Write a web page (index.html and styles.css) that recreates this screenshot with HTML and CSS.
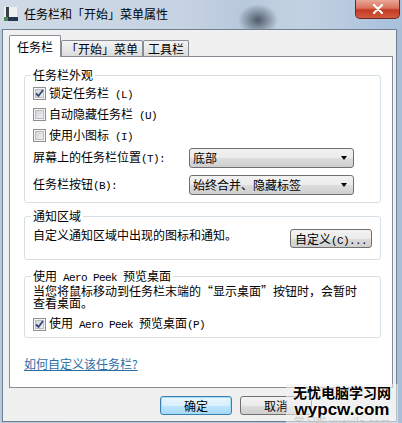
FILE: index.html
```html
<!DOCTYPE html>
<html lang="zh-CN">
<head>
<meta charset="utf-8">
<title>任务栏和「开始」菜单属性</title>
<link rel="stylesheet" href="styles.css">
</head>
<body>
<div class="window">
  <div class="titlebar">
    <svg class="app-icon" viewBox="0 0 16 16" width="16" height="16">
      <rect x="1" y="1" width="13" height="12" fill="#eef0f2"/>
      <rect x="3" y="1" width="3" height="11" fill="#3a3f45"/>
      <rect x="1" y="11" width="14" height="4" fill="#24364d"/>
      <rect x="1" y="11" width="4" height="4" fill="#4f8a55"/>
    </svg>
    <span class="title">任务栏和「开始」菜单属性</span>
    <div class="close">
      <svg viewBox="0 0 12 10" width="12" height="10"><path d="M2 1 L10 9 M10 1 L2 9" stroke="#fff" stroke-width="2.2" stroke-linecap="round"/></svg>
    </div>
  </div>
  <div class="client">
    <div class="tabs">
      <div class="tab active">任务栏</div>
      <div class="tab">「开始」菜单</div>
      <div class="tab">工具栏</div>
    </div>
    <div class="panel">
      <fieldset class="group g1">
        <legend>任务栏外观</legend>
        <div class="check-row"><span class="cb"><svg viewBox="0 0 11 11" width="11" height="11"><path d="M2 5.5 L4.5 8 L9 2" stroke="#33487a" stroke-width="1.8" fill="none"/></svg></span><span class="ct">锁定任务栏<span class="m"> (L)</span></span></div>
        <div class="check-row"><span class="cb"></span><span class="ct">自动隐藏任务栏<span class="m"> (U)</span></span></div>
        <div class="check-row"><span class="cb"></span><span class="ct">使用小图标<span class="m"> (I)</span></span></div>
        <div class="select-row first">
          <span class="lbl">屏幕上的任务栏位置<span class="m">(T):</span></span>
          <div class="select"><span>底部</span><i class="arrow"></i></div>
        </div>
        <div class="select-row second">
          <span class="lbl">任务栏按钮<span class="m">(B):</span></span>
          <div class="select"><span>始终合并、隐藏标签</span><i class="arrow"></i></div>
        </div>
      </fieldset>
      <fieldset class="group g2">
        <legend>通知区域</legend>
        <div class="notify-row">
          <span class="notify-text">自定义通知区域中出现的图标和通知。</span>
          <div class="btn wide">自定义<span class="m">(C)...</span></div>
        </div>
      </fieldset>
      <fieldset class="group g3">
        <legend>使用<span class="m"> Aero Peek </span>预览桌面</legend>
        <p class="peek-text">当您将鼠标移动到任务栏末端的“显示桌面”按钮时，会暂时<br>查看桌面。</p>
        <div class="check-row peek"><span class="cb"><svg viewBox="0 0 11 11" width="11" height="11"><path d="M2 5.5 L4.5 8 L9 2" stroke="#33487a" stroke-width="1.8" fill="none"/></svg></span><span class="ct">使用<span class="m"> Aero Peek </span>预览桌面<span class="m">(P)</span></span></div>
      </fieldset>
      <a class="help-link" href="#">如何自定义该任务栏?</a>
    </div>
    <div class="buttons">
      <div class="btn default">确定</div>
      <div class="btn">取消</div>
    </div>
  </div>
  <div class="watermark">
    <div class="wm-cn">无忧电脑学习网</div>
    <div class="wm-en">wypcw.com</div>
    <div class="wm-faint">学习啦 xuexila.com</div>
  </div>
</div>
</body>
</html>
```

FILE: styles.css
```css
* { box-sizing: border-box; }
html, body { margin: 0; padding: 0; }
body {
  width: 402px;
  height: 423px;
  overflow: hidden;
  font-family: "Noto Sans CJK SC", "Noto Sans", sans-serif;
  font-size: 12px;
  color: #000;
  background: #b4c7dc;
}
.window {
  position: relative;
  width: 402px;
  height: 423px;
  overflow: hidden;
  display: flex;
  flex-direction: column;
  background: linear-gradient(90deg, #b9cadc 0%, #b3c6db 60%, #a9bfd8 100%);
}
.titlebar {
  flex: none;
  height: 29px;
  display: flex;
  align-items: flex-start;
  background:
    radial-gradient(ellipse 20px 16px at 258px 20px, rgba(50,62,76,0.8), rgba(50,62,76,0) 100%),
    linear-gradient(90deg, #cfdae6 0%, #c6d3e2 45%, #b8c9dc 60%, #c3d2e2 75%, #a8c0db 100%);
}
.app-icon { margin: 6px 0 0 3px; flex: none; }
.title {
  margin: 6px 0 0 5px;
  line-height: 16px;
  font-size: 12px;
}
.close {
  margin-left: auto;
  margin-right: 2px;
  width: 45px;
  height: 19px;
  border: 1px solid #6d2a22;
  border-top: none;
  border-radius: 0 0 5px 5px;
  background: linear-gradient(#e9a796 0%, #d9735f 45%, #c23a22 55%, #d25a3e 100%);
  display: flex;
  align-items: center;
  justify-content: center;
}
.close svg { display: block; }
.client {
  flex: 1;
  margin: 0 5px 1px 2px;
  border: 1px solid #6e7f91;
  background: #f0f0f0;
  display: flex;
  flex-direction: column;
}
.tabs {
  flex: none;
  height: 27px;
  margin-bottom: -1px;
  padding-left: 6px;
  display: flex;
  align-items: flex-end;
  position: relative;
  z-index: 1;
}
.tab {
  height: 16px;
  margin-bottom: 1px;
  border: 1px solid #898c95;
  border-bottom: none;
  border-radius: 2px 2px 0 0;
  background: linear-gradient(#f4f4f4, #e6e6e6 60%, #dcdcdc);
  text-align: center;
  line-height: 16px;
  padding: 0 4px;
  white-space: nowrap;
}
.tab:nth-child(2) { width: 82px; }
.tab:nth-child(3) { width: 46px; }
.tab.active {
  width: 52px;
  height: 22px;
  margin-bottom: 0;
  background: #fff;
  line-height: 22px;
}
.panel {
  flex: none;
  height: 332px;
  margin: 0 3px 0 6px;
  border: 1px solid #898c95;
  background: #fff;
  padding: 0 11px 0 14px;
}
.group {
  margin: 0;
  min-width: 0;
  border: 1px solid #d5dfe5;
  border-radius: 3px;
  padding: 0 8px;
}
.group legend {
  padding: 0 2px;
  margin-left: -2px;
  line-height: 12px;
  height: 12px;
  font-size: 12px;
  white-space: pre;
}
.g1 { margin-top: 12px; padding-top: 2px; padding-bottom: 7px; }
.g2 { margin-top: 7px; padding-top: 6px; padding-bottom: 10px; }
.g3 { margin-top: 10px; padding-top: 3px; padding-bottom: 3px; }
.m {
  font-family: "Liberation Mono", "DejaVu Sans Mono", monospace;
  font-size: 11px;
  letter-spacing: -0.6px;
  white-space: pre;
}
.check-row {
  height: 21px;
  display: flex;
  align-items: center;
  line-height: 12px;
  white-space: nowrap;
}
.ct { white-space: nowrap; }
.cb {
  flex: none;
  width: 13px;
  height: 13px;
  margin-right: 3px;
  border: 1px solid #8e8f8f;
  background: linear-gradient(135deg, #c9cdd2 0%, #e4e6e8 60%, #f6f6f6 100%);
  box-shadow: inset 0 0 0 1px #f4f4f4, inset 0 0 0 2px #b9bdc2;
}
.cb svg { display: block; }
.select-row {
  height: 21px;
  display: flex;
  align-items: center;
  line-height: 12px;
}
.select-row.first { margin-top: 1px; }
.select-row.second { margin-top: 6px; }
.lbl { width: 156px; flex: none; white-space: nowrap; }
.select {
  width: 165px;
  height: 20px;
  border: 1px solid #707070;
  border-radius: 3px;
  background: linear-gradient(#f2f2f2 0%, #ebebeb 50%, #dddddd 50%, #cfcfcf 100%);
  display: flex;
  align-items: center;
  padding-left: 3px;
  line-height: 12px;
}
.arrow {
  margin-left: auto;
  margin-right: 6px;
  width: 0;
  height: 0;
  border-top: 4px solid #000;
  border-left: 3.5px solid transparent;
  border-right: 3.5px solid transparent;
}
.notify-row {
  height: 21px;
  display: flex;
  justify-content: space-between;
  align-items: flex-start;
}
.notify-text { margin-top: 1px; line-height: 12px; }
.btn {
  width: 72px;
  height: 19px;
  border: 1px solid #707070;
  border-radius: 3px;
  background: linear-gradient(#f2f2f2 0%, #ebebeb 50%, #dddddd 50%, #cfcfcf 100%);
  text-align: center;
  line-height: 17px;
  white-space: nowrap;
}
.btn.wide { width: 82px; margin-top: 1px; }
.btn.default {
  border-color: #3c7fb1;
  background: linear-gradient(#eaf6fd 0%, #d9f0fc 50%, #bee6fd 50%, #a7d9f5 100%);
  box-shadow: inset 0 0 0 1px #9edcf8;
}
.peek-text {
  margin: 0;
  line-height: 12px;
  white-space: nowrap;
}
.check-row.peek { height: 20px; margin-top: 5px; }
.help-link {
  display: block;
  width: fit-content;
  margin-top: 20px;
  line-height: 12px;
  color: #2b6fa6;
  text-decoration: underline;
}
.buttons {
  flex: none;
  display: flex;
  gap: 8px;
  margin-top: 8px;
  padding-left: 157px;
}
.watermark {
  position: absolute;
  left: 286px;
  top: 384px;
  width: 112px;
  background: rgba(242, 242, 242, 0.55);
  text-align: center;
}
.wm-cn {
  font-size: 14px;
  font-weight: 700;
  line-height: 16px;
  white-space: nowrap;
  text-shadow: 0 0 2px #fff, 0 0 2px #fff;
}
.wm-en {
  font-family: "Liberation Sans", Arial, sans-serif;
  font-size: 17px;
  font-weight: 700;
  line-height: 17px;
  margin-top: 1px;
  white-space: nowrap;
  text-shadow: 0 0 2px #fff, 0 0 2px #fff;
}
.wm-faint {
  font-size: 11px;
  line-height: 12px;
  margin-top: -3px;
  white-space: nowrap;
  color: #c9c9c9;
}
```
